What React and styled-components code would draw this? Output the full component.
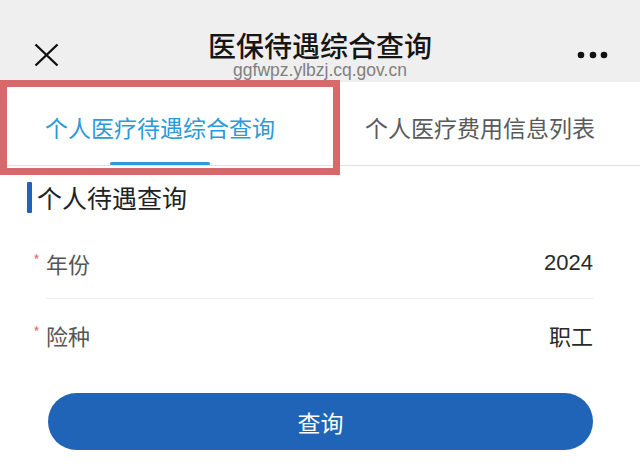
import React from 'react'
import styled, { createGlobalStyle } from 'styled-components'

/******************************************************************************/
// Constants
/******************************************************************************/

const FONT = `'Noto Sans CJK SC', 'Noto Sans', sans-serif`
const LATIN = `'Liberation Sans', 'Noto Sans CJK SC', sans-serif`
const BLUE = '#1f64b6'
const TAB_BLUE = '#2b9ad7'

const TABS = ['个人医疗待遇综合查询', '个人医疗费用信息列表']

const FIELDS = [
  { label: '年份', value: '2024' },
  { label: '险种', value: '职工' }
]

/******************************************************************************/
// Styled
/******************************************************************************/

const Global = createGlobalStyle`
  html, body {
    margin: 0;
    padding: 0;
    background: #ffffff;
  }
  body {
    width: 640px;
    height: 476px;
    overflow: hidden;
    font-family: ${FONT};
  }
`

const Page = styled.div`
  display: flex;
  flex-direction: column;
  width: 640px;
  height: 476px;
  background: #ffffff;
`

const NavBar = styled.header`
  box-sizing: border-box;
  height: 82px;
  padding: 30px 0 2px;
  background: #efefef;

  display: grid;
  grid-template-columns: 100px 1fr 100px;
  align-items: center;
`

const NavSide = styled.div`
  display: flex;
  justify-content: ${p => (p.right ? 'flex-end' : 'flex-start')};
  padding: ${p => (p.right ? '0 32px 0 0' : '0 0 0 34px')};
`

const TitleBlock = styled.div`
  display: flex;
  flex-direction: column;
  align-items: center;
`

const Title = styled.h1`
  margin: 0;
  font-size: 28px;
  line-height: 30px;
  font-weight: 500;
  color: #161616;
`

const Url = styled.div`
  font-family: 'Liberation Sans', Arial, sans-serif;
  font-size: 17.5px;
  line-height: 20px;
  color: #808080;
`

const TabBar = styled.nav`
  position: relative;
  display: flex;
  border-bottom: 1px solid #e2e2e2;
  background: #ffffff;
`

const Tab = styled.div`
  flex: 1;
  height: 83px;
  box-sizing: border-box;
  padding-top: 30px;
  display: flex;
  flex-direction: column;
  align-items: center;
`

const TabLabel = styled.span`
  font-size: 23px;
  line-height: 30px;
  color: ${p => (p.active ? TAB_BLUE : '#5a5a5a')};
`

const TabLine = styled.span`
  margin-top: 20px;
  width: 100px;
  height: 3px;
  border-radius: 2px;
  background: ${p => (p.active ? TAB_BLUE : 'transparent')};
`

const Highlight = styled.div`
  position: absolute;
  left: 0;
  top: -2px;
  width: 340px;
  height: 95px;
  box-sizing: border-box;
  border: 7px solid #d9686b;
  pointer-events: none;
`

const SectionTitle = styled.h2`
  margin: 16px 0 0 27px;
  display: flex;
  align-items: center;
  gap: 5px;
  font-size: 25px;
  line-height: 31px;
  font-weight: 400;
  color: #222222;

  &::before {
    content: '';
    width: 5px;
    height: 31px;
    border-radius: 1px;
    background: ${BLUE};
  }
`

const Form = styled.div`
  margin: 14px 47px 0 46px;
`

const Row = styled.div`
  display: flex;
  align-items: center;
  height: 71px;
  border-bottom: 1px solid ${p => (p.last ? 'transparent' : '#ebebeb')};
`

const Star = styled.span`
  width: 13px;
  margin-left: -13px;
  margin-top: -6px;
  font-size: 15px;
  color: #e07a7a;
`

const Label = styled.span`
  flex: 1;
  font-size: 22px;
  color: #555555;
`

const Value = styled.span`
  font-family: ${LATIN};
  font-size: 22px;
  color: #2a2a2a;
`

const Button = styled.button`
  margin: 22px 47px 0 48px;
  height: 57px;
  border: none;
  border-radius: 29px;
  background: ${BLUE};
  color: #ffffff;
  font-family: ${FONT};
  font-size: 23px;
`

/******************************************************************************/
// Icons
/******************************************************************************/

const CloseIcon = () =>
  <svg width='25' height='24' viewBox='0 0 25 24'>
    <path d='M1.5 1.5 L23.5 22.5 M23.5 1.5 L1.5 22.5' stroke='#111' strokeWidth='2.4' fill='none'/>
  </svg>

const MoreIcon = () =>
  <svg width='32' height='8' viewBox='0 0 32 8'>
    <circle cx='5' cy='4' r='3.3' fill='#111'/>
    <circle cx='17' cy='4' r='3.3' fill='#111'/>
    <circle cx='28' cy='4' r='3.3' fill='#111'/>
  </svg>

/******************************************************************************/
// Main Component
/******************************************************************************/

const App = () =>
  <Page>
    <Global/>
    <NavBar>
      <NavSide><CloseIcon/></NavSide>
      <TitleBlock>
        <Title>医保待遇综合查询</Title>
        <Url>ggfwpz.ylbzj.cq.gov.cn</Url>
      </TitleBlock>
      <NavSide right><MoreIcon/></NavSide>
    </NavBar>

    <TabBar>
      {TABS.map((tab, i) =>
        <Tab key={tab}>
          <TabLabel active={i === 0}>{tab}</TabLabel>
          <TabLine active={i === 0}/>
        </Tab>
      )}
      <Highlight/>
    </TabBar>

    <SectionTitle>个人待遇查询</SectionTitle>

    <Form>
      {FIELDS.map((f, i) =>
        <Row key={f.label} last={i === FIELDS.length - 1}>
          <Star>*</Star>
          <Label>{f.label}</Label>
          <Value>{f.value}</Value>
        </Row>
      )}
    </Form>

    <Button>查询</Button>
  </Page>

/******************************************************************************/
// Exports
/******************************************************************************/

export default App
